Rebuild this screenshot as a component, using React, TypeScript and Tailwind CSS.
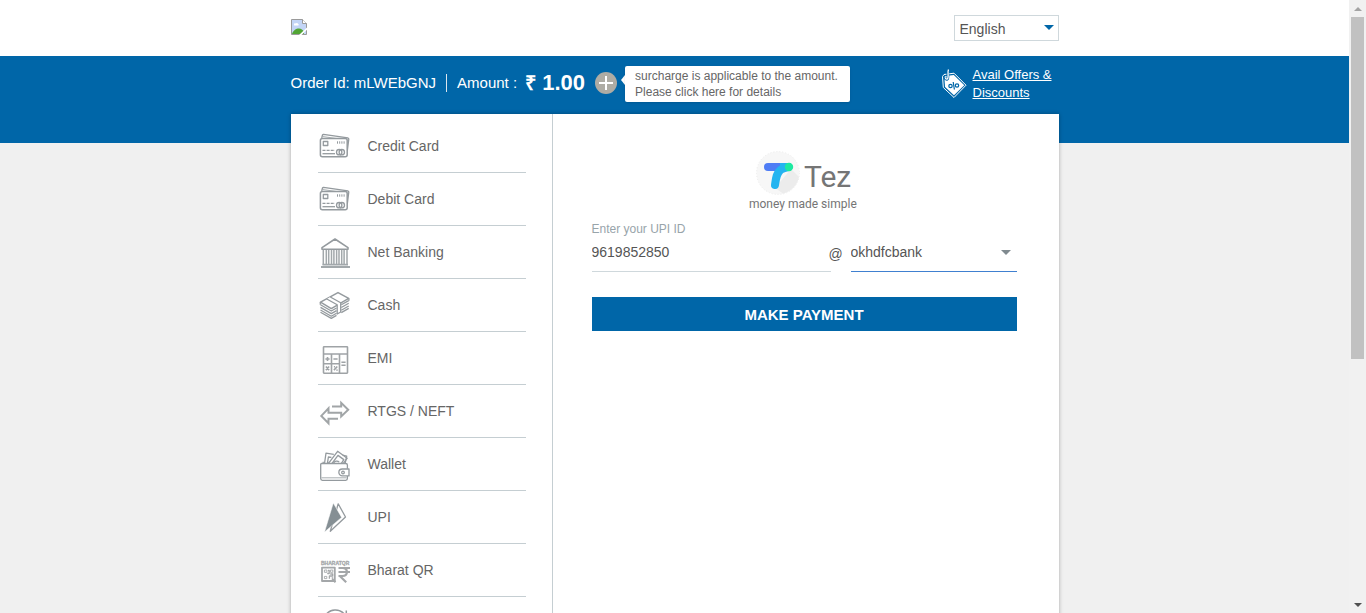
import React, { useState } from "react";

function Icon({ children }: { children: React.ReactNode }) {
  return (
    <svg viewBox="0 0 32 32" className="size-8 shrink-0 overflow-visible" fill="none" stroke="#949a9e" strokeWidth="1.3" strokeLinejoin="round" aria-hidden="true">
      {children}
    </svg>
  );
}

function CardIcon() {
  return (
    <Icon>
      <path d="M2.7 8 3.5 4.8 4.5 4.3 28.9 7.9 29.8 9 28.3 21" />
      <path d="M3.5 6.5 27.5 10" strokeWidth="0.8" />
      <rect x="1.4" y="8.5" width="26.8" height="18.3" rx="2" fill="#fff" strokeWidth="1.5" />
      <rect x="4.3" y="11.5" width="4.5" height="4" />
      <path d="M18.5 11.3v2.4M20.7 11.3v2.4M22.9 11.3v2.4M25.1 11.3v2.4" strokeWidth="1" />
      <path d="M3.5 20.3H16" strokeDasharray="3 1.1" />
      <path d="M3.5 23.7H16" />
      <circle cx="20.2" cy="22.2" r="2.7" />
      <circle cx="22.8" cy="22.2" r="2.7" />
    </Icon>
  );
}

function BankIcon() {
  return (
    <Icon>
      <path d="M16 3 3 11.600v1.600h26v-1.600Z" strokeWidth="1.6" />
      <path d="M4.300 13.800v15M7.300 14v14.500M9.700 14v14.500M12.500 14v14.500M14.900 14v14.500M17.600 14v14.500M20 14v14.500M22.700 14v14.500M25.100 14v14.500M28 13.800v15" strokeWidth="1.5" stroke="#a2a8ab" />
      <path d="M3.500 28.600H29M2 31h29" strokeWidth="1.8" stroke="#a2a8ab" />
    </Icon>
  );
}

function CashIcon() {
  return (
    <Icon>
      <path d="M1.500 13.200 19 3.600 29.700 9.400 12.300 19.600Z" strokeWidth="1.5" />
      <path d="M1.500 15.800 12.300 22 17.500 19M1.500 18.400l10.800 6.200 5.200-3M1.500 21l10.800 6.200 5.200-3M1.500 23.200l10.800 6.200 5.200-3" />
      <path d="m22.300 15.800 7.400-4.200M22.300 18.500l7.400-4.200M22.300 21.200l7.400-4.200M22.300 23.600l7.400-4.200" />
      <path d="M7.800 10 18.200 15.800V25l3.500-2v-9.200L11.300 8" fill="#fff" />
      <path d="M1.300 13v2.800M29.900 9.400v2.400" />
    </Icon>
  );
}

function EmiIcon() {
  return (
    <Icon>
      <g stroke="#9fa3a6" strokeWidth="1.6">
        <rect x="4.500" y="4.700" width="24" height="26.500" rx="0.6" />
        <path d="M4.500 12h24M4.500 21.700h16M12.500 12v19.200M20.500 12v19.200" />
        <path d="M6.400 17h4.200M8.500 14.900v4.200M14.400 17h4.200M22.400 20.200h4.200M22.400 23.200h4.200M6.900 24.500l3.200 3.600M10.100 24.500l-3.200 3.600M14.900 28.100l3.400-3.600M14.900 24.700h1.200M17.400 28.100h1.200" />
      </g>
    </Icon>
  );
}

function TransferIcon() {
  return (
    <Icon>
      <g strokeWidth="2" stroke="#a1a5a7" strokeLinejoin="miter">
        <path d="M13 11.500h9.200V7.800l7 6.900-7 6.800v-3.700H9.500v-4.500L2.300 20.900l7.200 7.400v-4.500H19" />
      </g>
    </Icon>
  );
}

function WalletIcon() {
  return (
    <Icon>
      <path d="M5.500 15.500 7 5.200l7.800 1.100M8.500 15l.9-6 3 .4M9.500 15.400 18.600 3.300l9.600 6.900-3.800 5.200M13 15.400l6-8 5.800 4.200-2.400 3.800" />
      <path d="M14.600 15.300a3.400 3.400 0 0 1 5.600-1.200M23.500 7l4.200 1.200-1.500 7" />
      <path d="M4.200 15.500H2.600c-.6 0-.9.5-.9 1.100v14c0 1 .7 1.700 1.700 1.700h23.300c1 0 1.700-.7 1.700-1.700v-2.500M28.400 20.800v-3.700c0-1-.7-1.600-1.700-1.600H4.200v-1.700" />
      <path d="M30 21h-6.700a3.200 3.200 0 0 0 0 6.900H30Z" />
      <circle cx="24" cy="24.500" r="1.3" />
      <path d="M2.500 29.800h25" strokeWidth="0.8" />
    </Icon>
  );
}

function UpiIcon() {
  return (
    <Icon>
      <path d="M19.200 2.800 26.500 16 11.300 30.300Z" strokeWidth="1.3" />
      <path d="M14.300 2 22.600 16.400 5.500 31Z" fill="#858f94" stroke="#fff" strokeWidth="0.5" />
    </Icon>
  );
}

function BharatQrIcon() {
  return (
    <Icon>
      <text x="2" y="11.200" fontSize="5" fontWeight="700" fill="#a4a7a9" stroke="#a4a7a9" strokeWidth="0.3" fontFamily="Liberation Sans, Arial, sans-serif">BHARATQR</text>
      <g stroke="#a4a7a9">
        <rect x="3" y="13.600" width="12.800" height="13.400" strokeWidth="1.8" />
        <path d="M5.400 16h2.500v2.300H5.400zM11.400 16h2.400v2.300h-2.400zM5.400 22.400h2.400v2.200H5.400z" strokeWidth="0.9" />
        <path d="M9 16.500h1.200v3h-2M11.200 20h2.500v2h-3.300v2.800M12.700 24h1.500" />
        <path d="m13.200 25 3.300 3.200" strokeWidth="2" />
        <path d="M19.500 14H31M19.500 18H31M19.500 22h4c3 0 4.400-1.500 4.400-4s-1.500-4-4.400-4M20.800 22l6.400 6.200" strokeWidth="2.2" />
      </g>
    </Icon>
  );
}

function RepeatIcon() {
  return (
    <Icon>
      <path d="M6 8A12 12 0 0 1 26 7M27.300 2.500V8h-5.600M28 16a12 12 0 0 1-21.600 10M4.400 30.500V25H10" strokeWidth="1.5" />
    </Icon>
  );
}

const methods = [
  { name: "Credit Card", icon: <CardIcon /> },
  { name: "Debit Card", icon: <CardIcon /> },
  { name: "Net Banking", icon: <BankIcon /> },
  { name: "Cash", icon: <CashIcon /> },
  { name: "EMI", icon: <EmiIcon /> },
  { name: "RTGS / NEFT", icon: <TransferIcon /> },
  { name: "Wallet", icon: <WalletIcon /> },
  { name: "UPI", icon: <UpiIcon /> },
  { name: "Bharat QR", icon: <BharatQrIcon /> },
];

function MissingImage() {
  return (
    <svg viewBox="0 0 16 16" className="size-4" role="img" aria-label="Merchant logo">
      <path d="M.5.5h11l4 4v11H.5z" fill="#c3d5f6" stroke="#9a9a9a" />
      <path d="M3 5.500c0-1 1-1.500 1.700-1 .5-1 2.300-.7 2.300.5 1 0 1.200 1.500 0 1.500H3.500C3 6.500 3 6 3 5.500z" fill="#fff" />
      <path d="M1 15c1-3.500 4-5.500 7-5.500 2 0 4 1.500 5 3V15z" fill="#52a535" />
      <path d="M8 16 16 8.500v2.300L10.500 16z" fill="#fff" />
      <path d="M11.500.5v4h4" fill="#fff" stroke="#9a9a9a" />
    </svg>
  );
}

function TagIcon() {
  return (
    <svg viewBox="0 0 26 30" className="h-[30px] w-[26px] shrink-0" fill="none" aria-hidden="true">
      <path d="M1.500 7.500 3 5.500l10-1.300L25 16.200 13 28.500 2.300 18.500Z" stroke="#fff" strokeWidth="1" strokeLinejoin="round" />
      <path d="m3.300 8 1.500-1 8-1 10.500 10.200L13 26.300 4.100 18Z" fill="#fff" />
      <path d="M7.200 1.500C6 2 7.500 6 6.800 9c-.3 2-2.800 1.500-2.600-.5" stroke="#0066a8" strokeWidth="2.8" />
      <path d="M7.500.5C6.300 3 7.700 6 6.900 9c-.4 1.800-2.400 1.500-2.500-.2" stroke="#fff" strokeWidth="1.3" />
      <circle cx="9.500" cy="17" r="1.7" stroke="#0066a8" strokeWidth="1.2" />
      <circle cx="16" cy="16.500" r="1.7" stroke="#0066a8" strokeWidth="1.2" />
      <path d="m12.200 13 1.200 7.500" stroke="#0066a8" strokeWidth="1.2" />
    </svg>
  );
}

function TezLogo() {
  return (
    <div className="mx-auto flex w-[110px] flex-col text-[#757575]">
      <div className="flex items-center gap-1 pl-[5px]">
        <svg viewBox="0 0 46 46" className="size-[46px] shrink-0" aria-hidden="true">
          <circle cx="24" cy="23" r="21.5" fill="#f7f7f7" stroke="#ededed" strokeDasharray="1 2" />
          <path d="m21 38 8 5.500A22 22 0 0 0 45 27L37 19Z" fill="#ececec" />
          <path d="M14 17h12" stroke="#4f7df5" strokeWidth="8" strokeLinecap="round" />
          <path d="M21 35c1-7 1.500-12 5.500-15 2.500-2 5-2.500 8-3" stroke="#24b4f0" strokeWidth="8" strokeLinecap="round" fill="none" />
          <path d="M26 13h8v8h-8z" fill="#24b4f0" />
          <circle cx="35" cy="17" r="4.2" fill="#1de9a0" />
        </svg>
        <span className="pt-2 font-[Roboto,sans-serif] text-3xl leading-9">Tez</span>
      </div>
      <span className="whitespace-nowrap font-[Roboto,sans-serif] text-xs leading-4">money made simple</span>
    </div>
  );
}

function Caret({ className }: { className: string }) {
  return (
    <svg viewBox="0 0 10 5" className={className} aria-hidden="true">
      <path d="M0 0h10L5 5z" fill="currentColor" />
    </svg>
  );
}

export default function App() {
  const [upi, setUpi] = useState("9619852850");

  return (
    <div className="flex h-screen overflow-hidden bg-[#f0f0f0] font-['Liberation_Sans',Arial,sans-serif] text-sm text-[#666]">
      <div className="min-w-0 flex-1 overflow-hidden">
        <header className="h-14 bg-white">
          <div className="mx-auto flex w-full max-w-3xl items-center justify-between pt-[15px]">
            <div className="pb-0.5">
              <MissingImage />
            </div>
            <div className="relative">
              <select aria-label="Language" className="block h-[26px] w-[105px] appearance-none border border-[#cfd8dc] bg-white pt-0.5 pl-[5px] text-sm text-[#555] outline-none">
                <option>English</option>
              </select>
              <Caret className="pointer-events-none absolute top-2.5 right-[5px] h-[5px] w-2.5 text-[#0066a8]" />
            </div>
          </div>
        </header>

        <div className="h-[87px] bg-[#0066a8] text-white">
          <div className="mx-auto flex h-14 w-full max-w-3xl items-center">
            <div className="flex items-center pb-0.5">
              <span className="text-[15px]">Order Id: mLWEbGNJ</span>
              <span className="mx-2.5 h-[18px] w-px bg-[#dbe6ee]" />
              <span className="text-[15px]">Amount :</span>
              <span className="ml-2 text-[22px] font-bold">
                <span className="text-xl">₹</span> 1.00
              </span>
              <button type="button" aria-label="Surcharge details" className="ml-2.5 flex size-[22px] items-center justify-center rounded-full bg-[#aeaca4]">
                <svg viewBox="0 0 14 14" className="size-3.5" aria-hidden="true">
                  <path d="M7 0v14M0 7h14" stroke="#fff" strokeWidth="2" />
                </svg>
              </button>
            </div>
            <div className="ml-1 flex items-center">
              <svg viewBox="0 0 4 10" className="mb-2 h-2.5 w-1" aria-hidden="true">
                <path d="M4 0v10L0 5z" fill="#fff" />
              </svg>
              <p className="h-9 w-[225px] whitespace-nowrap rounded-xs bg-white px-2.5 py-0.5 text-xs leading-4 text-[#666] shadow">
                surcharge is applicable to the amount.
                <br />
                Please click here for details
              </p>
            </div>
            <a href="#offers" className="ml-auto flex w-[118px] items-center gap-1.5 text-[13px] leading-[18px] text-white">
              <TagIcon />
              <span className="whitespace-nowrap underline">
                Avail Offers &amp;
                <br />
                Discounts
              </span>
            </a>
          </div>
        </div>

        <main className="mx-auto -mt-[29px] flex w-full max-w-3xl bg-white shadow-[0_0_4px_rgba(0,0,0,0.3)]">
          <nav className="w-[262px] shrink-0 border-r border-[#c5ced2] pt-1.5 pr-[26px] pl-[27px]">
            {methods.map((m) => (
              <button key={m.name} type="button" className="flex h-[53px] w-full items-center gap-[17px] border-b border-[#c5ced2] px-px text-left text-sm">
                {m.icon}
                <span>{m.name}</span>
              </button>
            ))}
            <button type="button" aria-label="Recurring payment" className="flex h-[53px] w-full items-center px-px">
              <RepeatIcon />
            </button>
          </nav>

          <form className="flex-1 pt-9 pr-[42px] pl-[39px]" onSubmit={(e) => e.preventDefault()}>
            <TezLogo />
            <label htmlFor="upi" className="mt-2 block text-xs leading-[18px] text-[#98a4aa]">
              Enter your UPI ID
            </label>
            <div className="flex items-start">
              <input
                id="upi"
                value={upi}
                onChange={(e) => setUpi(e.target.value)}
                className="h-[34px] min-w-0 flex-1 border-b border-[#cfd8dc] pb-1.5 text-sm text-[#555] outline-none"
              />
              <span className="-ml-0.5 w-[22px] pt-2 text-sm leading-4 text-[#555]">@</span>
              <div className="relative w-[166px]">
                <select aria-label="UPI handle" className="block h-[34px] w-full appearance-none border-b border-[#4080d0] bg-white pb-1.5 text-sm text-[#555] outline-none">
                  <option>okhdfcbank</option>
                </select>
                <Caret className="pointer-events-none absolute top-3 right-1.5 h-[5px] w-2.5 text-[#808a8f]" />
              </div>
            </div>
            <button type="submit" className="mt-[25px] h-[34px] w-full bg-[#0066a8] pt-0.5 text-[15px] font-bold text-white">
              MAKE PAYMENT
            </button>
          </form>
        </main>
      </div>

      <div className="flex w-[17px] shrink-0 flex-col items-center justify-between bg-[#f1f1f1]" aria-hidden="true">
        <div className="flex w-full flex-col items-center">
          <div className="flex h-[17px] items-center">
            <svg viewBox="0 0 8 4" className="h-1 w-2">
              <path d="M4 0 8 4H0z" fill="#a3a3a3" />
            </svg>
          </div>
          <div className="h-[342px] w-[13px] bg-[#c1c1c1]" />
        </div>
        <div className="flex h-[17px] items-center">
          <svg viewBox="0 0 8 4" className="h-1 w-2">
            <path d="M0 0h8L4 4z" fill="#505050" />
          </svg>
        </div>
      </div>
    </div>
  );
}
